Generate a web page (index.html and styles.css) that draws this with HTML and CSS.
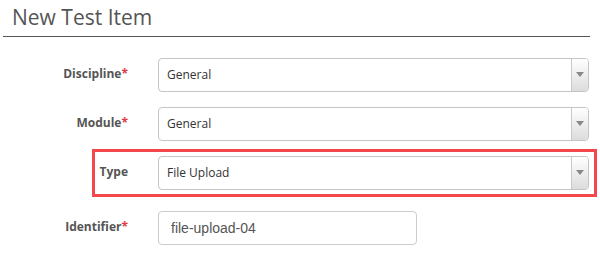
FILE: index.html
```html
<!DOCTYPE html>
<html lang="en">
<head>
    <meta charset="UTF-8">
    <title>New Test Item</title>
    <link rel="stylesheet" href="styles.css">
</head>
<body>
    <div class="page-header">
        <h1>New Test Item</h1>
    </div>

    <form class="item-form">
        <div class="form-row">
            <label>Discipline<span class="req">*</span></label>
            <div class="select-box">
                <span class="select-value">General</span>
                <span class="select-arrow"></span>
            </div>
        </div>

        <div class="form-row">
            <label>Module<span class="req">*</span></label>
            <div class="select-box">
                <span class="select-value">General</span>
                <span class="select-arrow"></span>
            </div>
        </div>

        <!-- highlighted row -->
        <div class="form-row highlight">
            <label>Type</label>
            <div class="select-box">
                <span class="select-value">File Upload</span>
                <span class="select-arrow"></span>
            </div>
        </div>

        <div class="form-row identifier-row">
            <label for="identifier">Identifier<span class="req">*</span></label>
            <input type="text" id="identifier" class="text-input" value="file-upload-04">
        </div>
    </form>
</body>
</html>
```

FILE: styles.css
```css
/* Page */
body {
    margin: 0;
    font-family: "Open Sans", Arial, sans-serif;
    background-color: #fff;
    color: #555;
}

.page-header {
    margin: 0 10px 0 3px;
    padding: 4px 0 6px 9px;
    border-bottom: 1px solid #555;
}

.page-header h1 {
    margin: 0;
    font-size: 21px;
    font-weight: 400;
    line-height: 26px;
    color: #555;
}

/* Form */
.item-form {
    padding-top: 21px;
}

.form-row {
    display: flex;
    align-items: center;
    height: 34px;
    margin-bottom: 15px;
}

.form-row label {
    flex-shrink: 0;
    width: 158px;
    padding-right: 30px;
    box-sizing: border-box;
    text-align: right;
    font-size: 12px;
    font-weight: 700;
    color: #555;
    margin-top: -4px;
}

.req {
    color: #e0393e;
}

.select-box {
    flex-shrink: 0;
    display: flex;
    width: 431px;
    height: 34px;
    box-sizing: border-box;
    border: 1px solid #c4c4c4;
    border-radius: 4px;
    overflow: hidden;
}

.select-value {
    flex: 1;
    padding-left: 8px;
    line-height: 32px;
    font-size: 12px;
    color: #333;
}

.select-arrow {
    position: relative;
    width: 16px;
    border-left: 1px solid #c8c8c8;
    background: linear-gradient(#fff, #dcdcdc);
}

.select-arrow::after {
    content: "";
    position: absolute;
    left: 4px;
    top: 13px;
    border-left: 4px solid transparent;
    border-right: 4px solid transparent;
    border-top: 5px solid #888;
}

.highlight {
    position: relative;
}

.highlight::after {
    content: "";
    position: absolute;
    left: 92px;
    top: -7px;
    width: 505px;
    height: 48px;
    box-sizing: border-box;
    border: 3px solid #f4474b;
}

.identifier-row {
    margin-top: 21px;
}

.text-input {
    flex-shrink: 0;
    width: 259px;
    height: 34px;
    box-sizing: border-box;
    padding: 0 12px;
    border: 1px solid #ccc;
    border-radius: 4px;
    font-family: "Liberation Sans", Arial, sans-serif;
    font-size: 14px;
    color: #555;
}
```
